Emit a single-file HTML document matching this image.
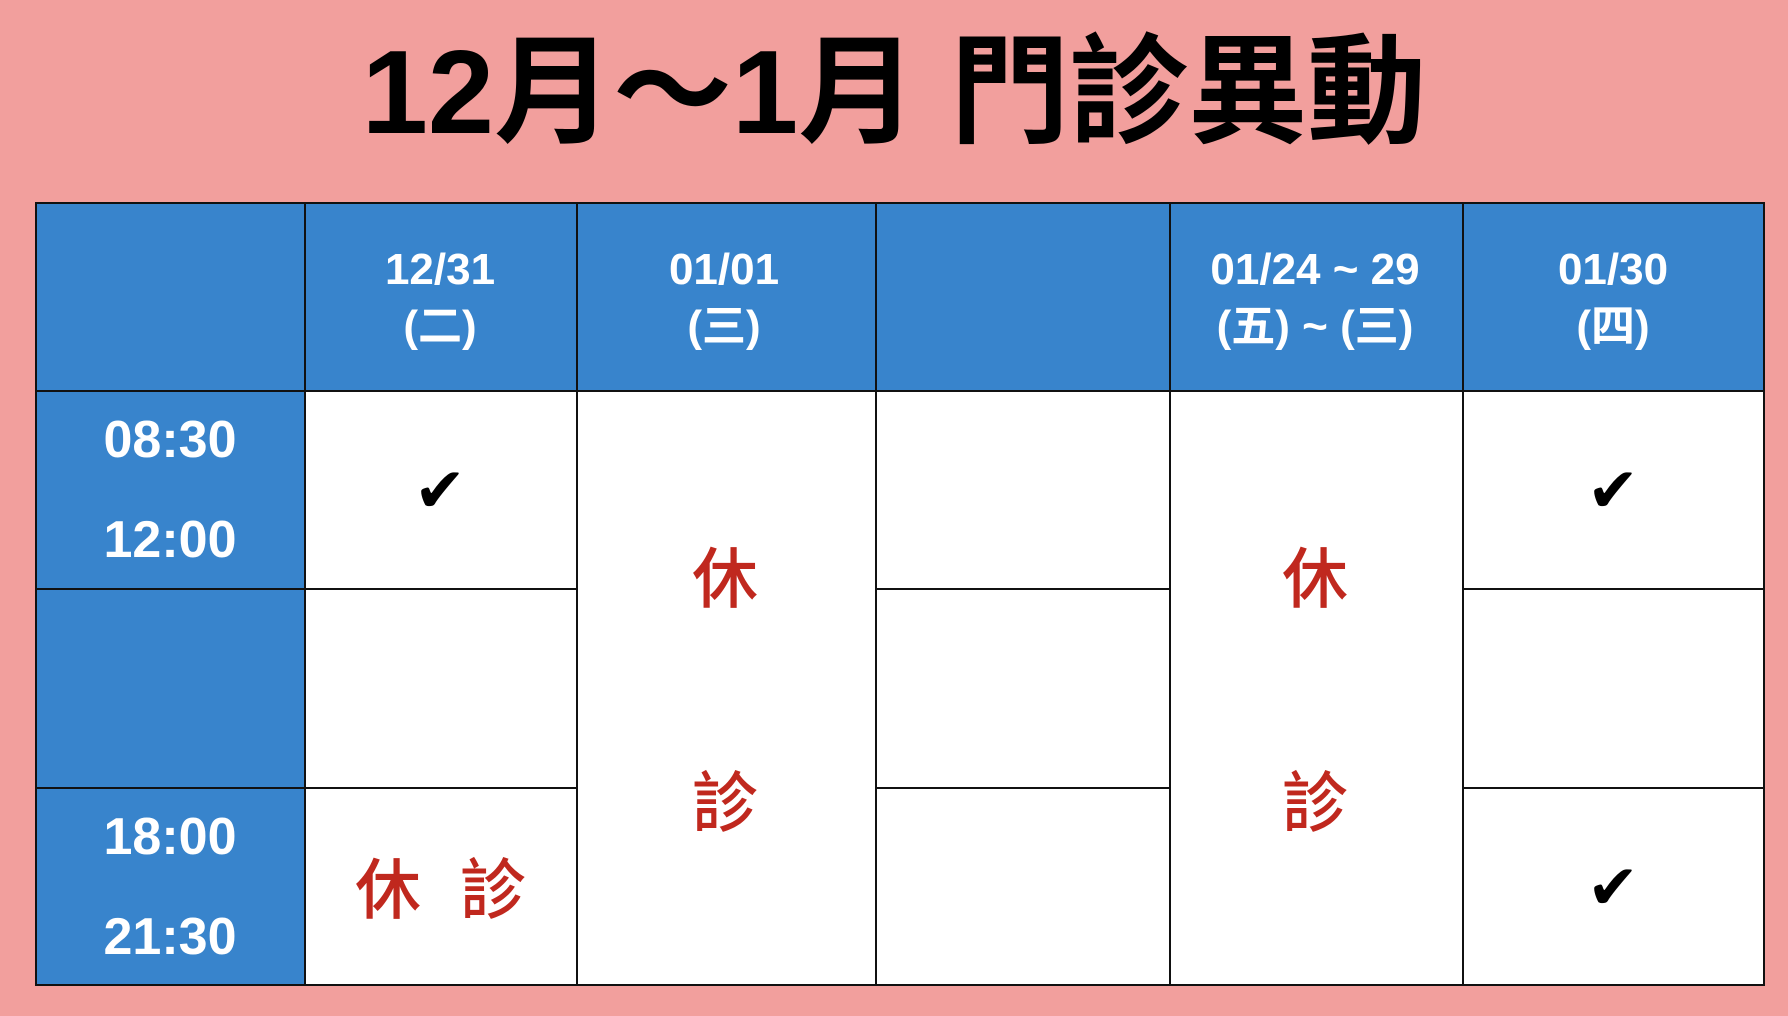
<!DOCTYPE html>
<html><head><meta charset="utf-8"><style>
body{margin:0;width:1788px;height:1016px;background:#f29f9d;position:relative;overflow:hidden;font-family:"Liberation Sans","Noto Sans CJK TC",sans-serif}
.t{position:absolute;left:0;width:1788px;top:28px;text-align:center;font-size:119px;font-weight:bold;color:#000;line-height:130px;font-family:"Liberation Sans","Noto Sans CJK TC",sans-serif}
.c{position:absolute;box-sizing:border-box;border:2.5px solid #111}
.b{background:#3884cc}.w{background:#fff}
.x{position:absolute;transform:translate(-50%,-50%);white-space:nowrap;text-align:center}
.h{color:#fff;font-weight:bold;font-size:44px;line-height:57px}
.tm{color:#fff;font-weight:bold;font-size:52px}
.r{color:#c0281e;font-weight:500;font-size:66px}
.k{font-size:62px;color:#000;font-family:"DejaVu Sans",sans-serif;font-weight:bold}
</style></head><body>
<div class="t">12月～1月 門診異動</div>
<div class="c b" style="left:35px;top:202px;width:271px;height:190px"></div>
<div class="c b" style="left:304px;top:202px;width:274px;height:190px"></div>
<div class="c b" style="left:576px;top:202px;width:301px;height:190px"></div>
<div class="c b" style="left:875px;top:202px;width:296px;height:190px"></div>
<div class="c b" style="left:1169px;top:202px;width:295px;height:190px"></div>
<div class="c b" style="left:1462px;top:202px;width:303px;height:190px"></div>
<div class="c b" style="left:35px;top:390px;width:271px;height:200px"></div>
<div class="c b" style="left:35px;top:588px;width:271px;height:201px"></div>
<div class="c b" style="left:35px;top:787px;width:271px;height:199px"></div>
<div class="c w" style="left:304px;top:390px;width:274px;height:200px"></div>
<div class="c w" style="left:304px;top:588px;width:274px;height:201px"></div>
<div class="c w" style="left:304px;top:787px;width:274px;height:199px"></div>
<div class="c w" style="left:576px;top:390px;width:301px;height:596px"></div>
<div class="c w" style="left:875px;top:390px;width:296px;height:200px"></div>
<div class="c w" style="left:875px;top:588px;width:296px;height:201px"></div>
<div class="c w" style="left:875px;top:787px;width:296px;height:199px"></div>
<div class="c w" style="left:1169px;top:390px;width:295px;height:596px"></div>
<div class="c w" style="left:1462px;top:390px;width:303px;height:200px"></div>
<div class="c w" style="left:1462px;top:588px;width:303px;height:201px"></div>
<div class="c w" style="left:1462px;top:787px;width:303px;height:199px"></div>

<div class="x h" style="left:440px;top:298px">12/31<br>(二)</div>
<div class="x h" style="left:724px;top:298px">01/01<br>(三)</div>
<div class="x h" style="left:1315px;top:298px">01/24 ~ 29<br>(五) ~ (三)</div>
<div class="x h" style="left:1613px;top:298px">01/30<br>(四)</div>

<div class="x tm" style="left:170px;top:440px">08:30</div>
<div class="x tm" style="left:170px;top:540px">12:00</div>
<div class="x tm" style="left:170px;top:837px">18:00</div>
<div class="x tm" style="left:170px;top:937px">21:30</div>

<div class="x k" style="left:440px;top:490px">✔</div>
<div class="x k" style="left:1613px;top:490px">✔</div>
<div class="x k" style="left:1613px;top:887px">✔</div>

<div class="x r" style="left:725px;top:574px">休</div>
<div class="x r" style="left:725px;top:798px">診</div>
<div class="x r" style="left:1315px;top:574px">休</div>
<div class="x r" style="left:1315px;top:798px">診</div>
<div class="x r" style="left:388px;top:885px">休</div>
<div class="x r" style="left:493px;top:885px">診</div>
</body></html>
